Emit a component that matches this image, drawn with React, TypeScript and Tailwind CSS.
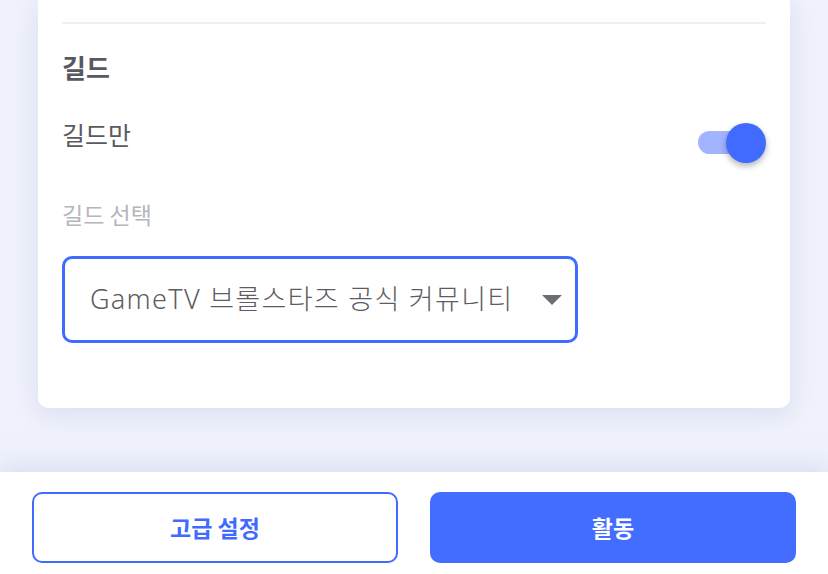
import { useState } from "react"

const KR = "font-['Noto_Sans_CJK_KR','Noto_Sans',sans-serif]"

const App = () => {
   const [guildOnly, setGuildOnly] = useState(true)

   return (
      <div className={`flex h-[574px] w-[828px] flex-col overflow-hidden bg-[#eff1fb] ${KR}`}>
         <div className="flex-1 px-[38px]">
            <div className="flex flex-col rounded-b-[10px] bg-white px-[24px] pt-[22px] pb-[65px] shadow-[0_6px_24px_rgba(190,198,230,0.45)]">
               <div className="h-[2px] w-full bg-[#eeeef8]" />

               <h2 className="mt-[25px] text-[26px] font-bold leading-[36px] text-[#58585f]">
                  길드
               </h2>

               <div className="mt-[33px] flex h-[48px] items-start justify-between">
                  <p className="text-[25px] leading-[32px] text-[#5a5a60]">길드만</p>
                  <button
                     className="relative mt-[5px] h-[40px] w-[68px]"
                     onClick={() => setGuildOnly(!guildOnly)}
                  >
                     <span className="absolute left-0 top-[8px] h-[23px] w-[48px] rounded-full bg-[#a2b4ff]" />
                     <span className="absolute right-0 top-0 h-[40px] w-[40px] rounded-full bg-[#416bff] shadow-[0_3px_6px_rgba(0,0,0,0.3)]" />
                  </button>
               </div>

               <p className="mt-[33px] text-[23px] leading-[30px] text-[#b5b5bd]">길드 선택</p>

               <div className="mt-[27px] flex h-[87px] w-[516px] items-center justify-between rounded-[10px] border-[3px] border-[#416bff] pl-[25px] pr-[13px]">
                  <span className="font-['Noto_Sans','Noto_Sans_CJK_KR',sans-serif] text-[27px] font-light tracking-[1.3px] text-[#5c5c62]">
                     GameTV 브롤스타즈 공식 커뮤니티
                  </span>
                  <svg width="20" height="10" viewBox="0 0 20 10">
                     <path d="M0 0 L20 0 L10 10 Z" fill="#6e6e72" />
                  </svg>
               </div>
            </div>
         </div>

         <div className="grid h-[102px] grid-cols-2 gap-[32px] bg-white px-[32px] pt-[20px] shadow-[0_-6px_20px_rgba(200,206,238,0.5)]">
            <button className="h-[71px] rounded-[10px] border-2 border-[#416bff] bg-white text-[23px] font-bold text-[#416bff]">
               고급 설정
            </button>
            <button className="h-[71px] rounded-[10px] bg-[#426dff] text-[23px] font-bold text-white">
               활동
            </button>
         </div>
      </div>
   )
}

export default App
